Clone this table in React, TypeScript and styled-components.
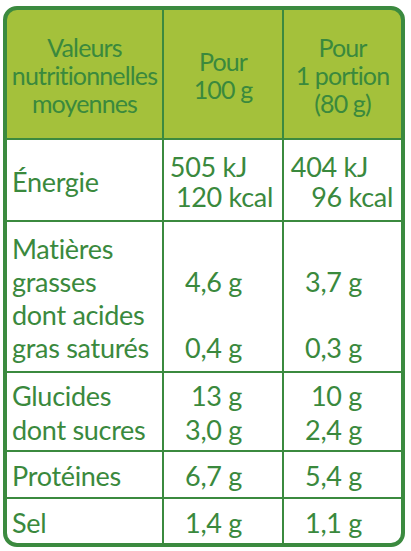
import React from 'react';
import styled, { createGlobalStyle } from 'styled-components';

const GREEN = '#3b8a3f';
const TEXT = '#3a893d';
const HEAD_BG = '#a4c13b';

const GlobalStyle = createGlobalStyle`
  body {
    margin: 0;
    background: #ffffff;
    font-family: Lato, "Liberation Sans", sans-serif;
  }
`;

const Table = styled.div`
  box-sizing: border-box;
  margin: 6px 0 0 3px;
  width: 402px;
  border: 4px solid ${GREEN};
  border-radius: 14px;
  overflow: hidden;
  background: ${GREEN};
  display: grid;
  grid-template-columns: 155px 118px 117px;
  grid-template-rows: 128px 80px 149px 77px 45px 44px;
  gap: 2px;
`;

const HeadCell = styled.div`
  background: ${HEAD_BG};
  color: ${TEXT};
  display: flex;
  flex-direction: column;
  align-items: center;
  justify-content: center;
  text-align: center;
  font-size: 25px;
  line-height: 28px;
  letter-spacing: -0.85px;
  padding-top: 2px;
`;

const Cell = styled.div<{ $lh: number; $label?: boolean }>`
  background: #ffffff;
  color: ${TEXT};
  display: flex;
  flex-direction: column;
  justify-content: center;
  align-items: ${(p) => (p.$label ? 'flex-start' : 'flex-end')};
  padding-left: ${(p) => (p.$label ? '5px' : '0')};
  padding-top: 3px;
  font-size: 27px;
  line-height: ${(p) => p.$lh}px;
  letter-spacing: -0.3px;
  white-space: pre;
`;

const Line = styled.span<{ $pr?: number }>`
  display: block;
  padding-right: ${(p) => p.$pr ?? 0}px;
`;

type Val = [string, number];

interface Row {
  label: string[];
  per100: Val[];
  portion: Val[];
  lh: number;
}

const rows: Row[] = [
  {
    label: ['Énergie'],
    per100: [['505 kJ', 35], ['120 kcal', 9]],
    portion: [['404 kJ', 33], ['96 kcal', 8]],
    lh: 30,
  },
  {
    label: ['Matières', 'grasses', 'dont acides', 'gras saturés'],
    per100: [[' ', 40], ['4,6 g', 40], [' ', 40], ['0,4 g', 40]],
    portion: [[' ', 39], ['3,7 g', 39], [' ', 39], ['0,3 g', 39]],
    lh: 33,
  },
  {
    label: ['Glucides', 'dont sucres'],
    per100: [['13 g', 40], ['3,0 g', 40]],
    portion: [['10 g', 39], ['2,4 g', 39]],
    lh: 34,
  },
  {
    label: ['Protéines'],
    per100: [['6,7 g', 40]],
    portion: [['5,4 g', 39]],
    lh: 32,
  },
  {
    label: ['Sel'],
    per100: [['1,4 g', 40]],
    portion: [['1,1 g', 39]],
    lh: 32,
  },
];

const App: React.FC = () => {
  return (
    <>
      <GlobalStyle />
      <Table>
        <HeadCell>
          <span>Valeurs</span>
          <span>nutritionnelles</span>
          <span>moyennes</span>
        </HeadCell>
        <HeadCell>
          <span>Pour</span>
          <span>100 g</span>
        </HeadCell>
        <HeadCell>
          <span>Pour</span>
          <span>1 portion</span>
          <span>(80 g)</span>
        </HeadCell>

        {rows.map((row) => (
          <React.Fragment key={row.label[0]}>
            <Cell $lh={row.lh} $label>
              {row.label.map((t) => (
                <Line key={t}>{t}</Line>
              ))}
            </Cell>
            <Cell $lh={row.lh}>
              {row.per100.map(([t, pr], i) => (
                <Line key={i} $pr={pr}>
                  {t}
                </Line>
              ))}
            </Cell>
            <Cell $lh={row.lh}>
              {row.portion.map(([t, pr], i) => (
                <Line key={i} $pr={pr}>
                  {t}
                </Line>
              ))}
            </Cell>
          </React.Fragment>
        ))}
      </Table>
    </>
  );
};

export default App;
